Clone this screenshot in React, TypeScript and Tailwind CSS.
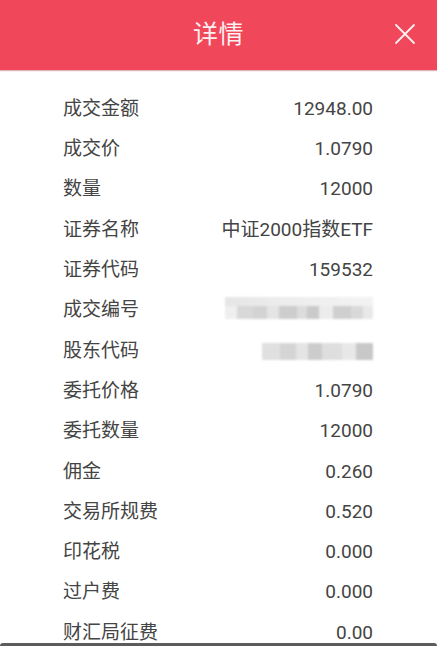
import React from "react";

type Row = { label: string; value?: string; masked?: "long" | "short" };

const rows: Row[] = [
  { label: "成交金额", value: "12948.00" },
  { label: "成交价", value: "1.0790" },
  { label: "数量", value: "12000" },
  { label: "证券名称", value: "中证2000指数ETF" },
  { label: "证券代码", value: "159532" },
  { label: "成交编号", masked: "long" },
  { label: "股东代码", masked: "short" },
  { label: "委托价格", value: "1.0790" },
  { label: "委托数量", value: "12000" },
  { label: "佣金", value: "0.260" },
  { label: "交易所规费", value: "0.520" },
  { label: "印花税", value: "0.000" },
  { label: "过户费", value: "0.000" },
  { label: "财汇局征费", value: "0.00" },
];

function Masked({ kind }: { kind: "long" | "short" }) {
  if (kind === "long") {
    return (
      <div className="flex h-[22px] w-[148px] translate-y-[-3px] flex-col blur-[1px]">
        <div className="h-[9px] w-full bg-gradient-to-r from-[#e6e6e6] via-[#eeeeee] to-[#f3f3f3]" />
        <div className="flex h-[13px] w-full">
          <div className="w-[12px] bg-[#efefef]" />
          <div className="w-[16px] bg-[#d8d8d8]" />
          <div className="w-[14px] bg-[#d3d3d3]" />
          <div className="w-[12px] bg-[#e4e4e4]" />
          <div className="w-[18px] bg-[#cdcdcd]" />
          <div className="w-[10px] bg-[#dcdcdc]" />
          <div className="w-[12px] bg-[#cacaca]" />
          <div className="w-[14px] bg-[#ececec]" />
          <div className="w-[18px] bg-[#cfcfcf]" />
          <div className="w-[12px] bg-[#d9d9d9]" />
          <div className="flex-1 bg-[#e8e8e8]" />
        </div>
      </div>
    );
  }
  return (
    <div className="flex h-[17px] w-[111px] translate-y-[1px] blur-[1px]">
      <div className="w-[18px] bg-[#e0e0e0]" />
      <div className="w-[16px] bg-[#d5d5d5]" />
      <div className="w-[12px] bg-[#e4e4e4]" />
      <div className="w-[14px] bg-[#cccccc]" />
      <div className="w-[20px] bg-[#dedede]" />
      <div className="w-[14px] bg-[#e8e8e8]" />
      <div className="flex-1 bg-[#c8c8c8]" />
    </div>
  );
}

export default function App() {
  return (
    <div
      className="flex h-[646px] w-[437px] flex-col overflow-hidden bg-white"
      style={{ fontFamily: "Roboto, 'Noto Sans CJK SC', sans-serif" }}
    >
      <header className="relative flex h-[70px] shrink-0 items-center justify-center bg-[#f1475a] shadow-[0_1px_1px_rgba(160,40,50,0.35)]">
        <span className="text-[25px] tracking-[0.5px] text-[#fdf0f1]">详情</span>
        <svg
          className="absolute right-[21px] top-[23px]"
          width="22"
          height="22"
          viewBox="0 0 22 22"
          fill="none"
          stroke="#fdf0f1"
          strokeWidth="1.8"
          strokeLinecap="round"
        >
          <path d="M2 2 L20 20 M20 2 L2 20" />
        </svg>
      </header>

      <div className="min-h-0 flex-1 overflow-hidden pl-[63px] pr-[64px] pt-[19px]">
        {rows.map((r) => (
          <div
            key={r.label}
            className="flex h-[40.3px] items-center justify-between text-[19px] text-[#444444]"
          >
            <span>{r.label}</span>
            {r.masked ? <Masked kind={r.masked} /> : <span>{r.value}</span>}
          </div>
        ))}
      </div>

      <div className="h-[3px] shrink-0 rounded-t-[3px] bg-[#5c5c5c]" />
    </div>
  );
}
